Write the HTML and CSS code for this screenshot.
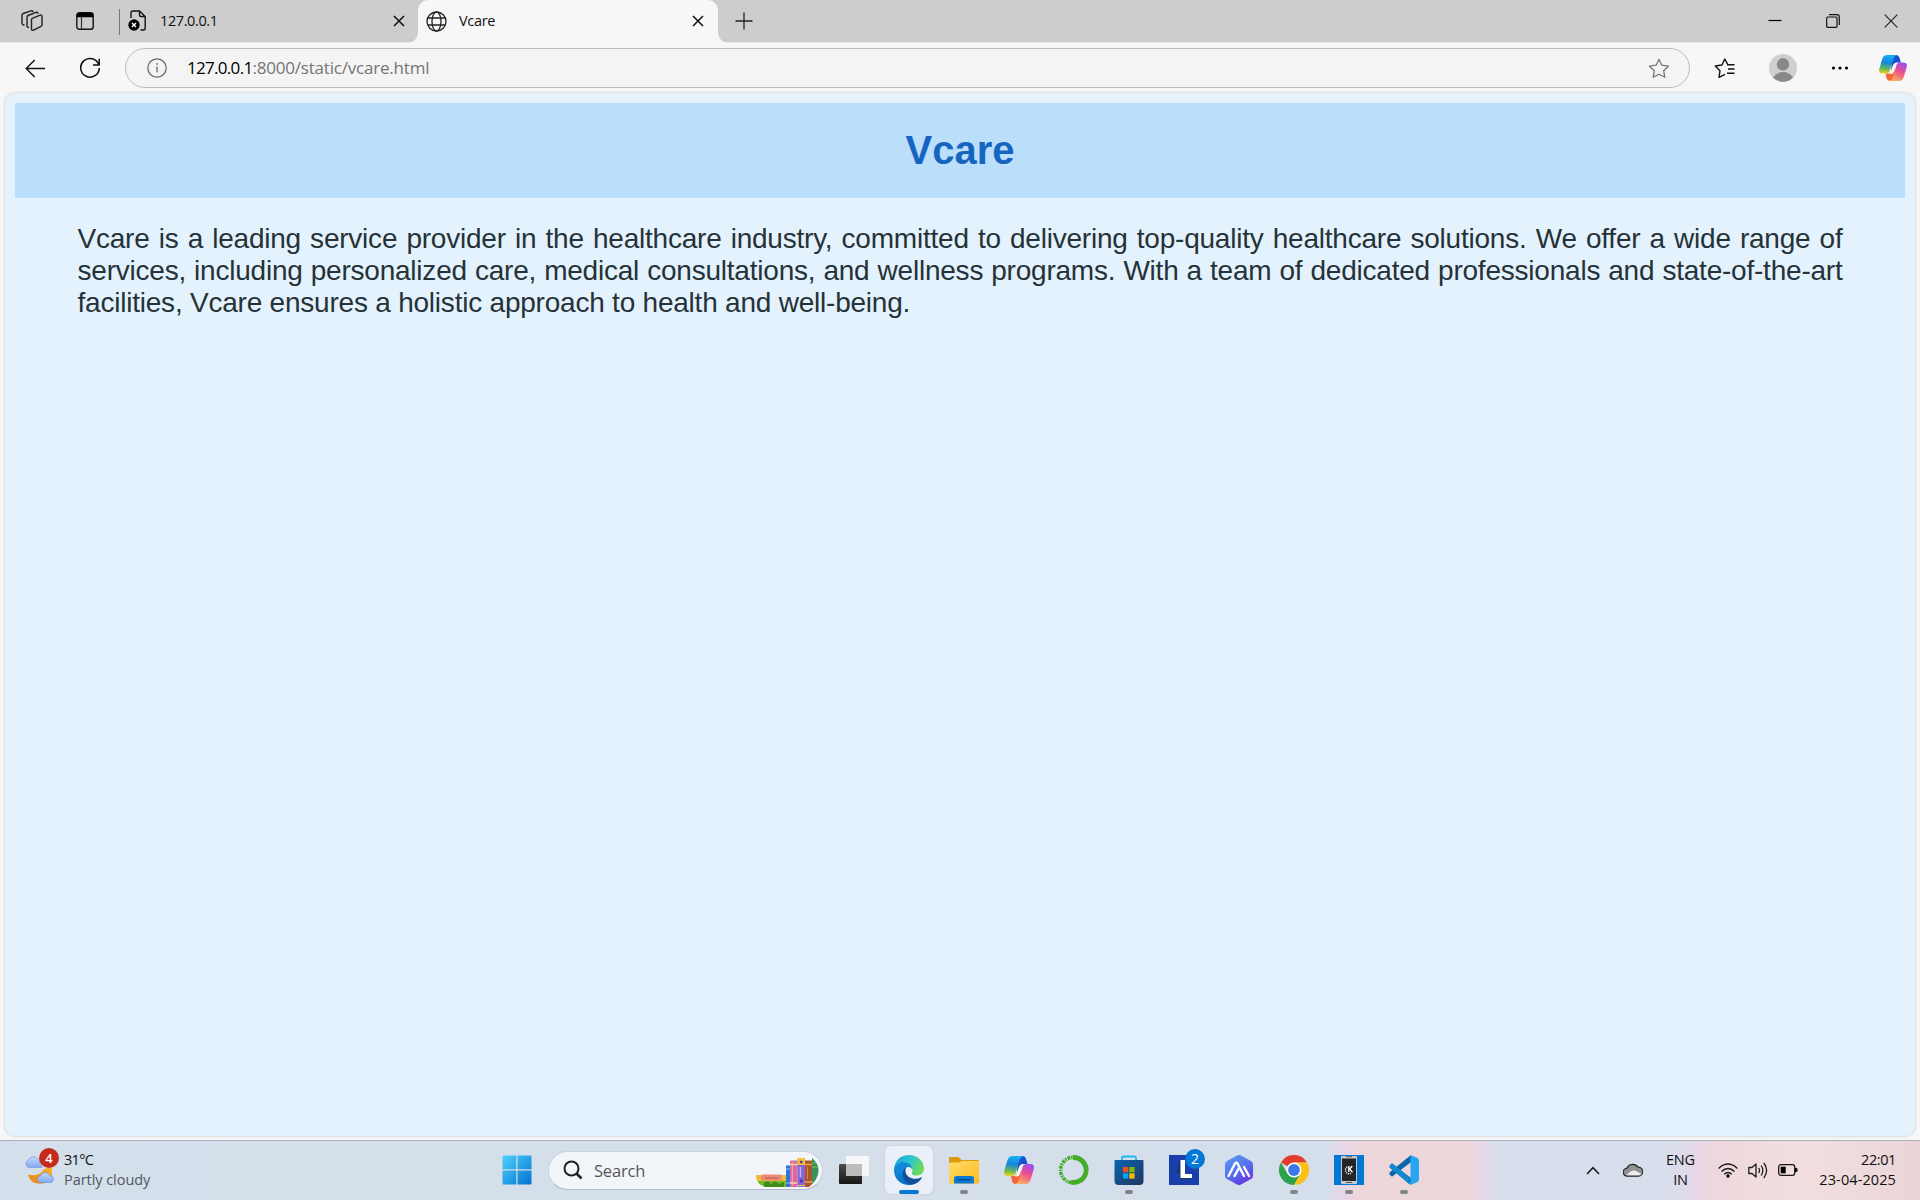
FILE: index.html
```
<!DOCTYPE html>
<html lang="en">
<head>
<meta charset="utf-8">
<title>Vcare</title>
<link rel="stylesheet" href="styles.css">
</head>
<body>
<header class="tabstrip">
  <svg class="ic workspaces" width="22" height="22" viewBox="0 0 22 22"><g fill="none" stroke="#222" stroke-width="1.4" stroke-linejoin="round" stroke-linecap="round"><path d="M11.2 8.3 19.2 5.2Q21 4.6 21 6.500V14.500Q21 15.700 20 16.300L12.500 20.200Q10.500 20.800 10.500 18.800V10Q10.500 8.700 11.200 8.300Z"/><path d="M7.500 17.500Q6 17.300 6 16V7.200Q6 6 7 5.500L15 2.400Q16.300 2 17 3.200"/><path d="M3 15Q1 14.800 1 13V5.300Q1 4 2.200 3.500L10 .9Q11.200 .6 12 1.500"/></g></svg>
  <svg class="ic tabmenu" width="18" height="18" viewBox="0 0 18 18"><rect x=".8" y=".8" width="16.400" height="16.400" rx="2.500" fill="none" stroke="#111" stroke-width="1.400"/><path d="M1 5.200V3Q1 1 3 1H15Q17 1 17 3V5.200Z" fill="#000"/><path d="M5.500 5V17" stroke="#333" stroke-width="1.200"/></svg>
  <span class="divider"></span>
  <div class="tab">
    <svg class="ic" width="19" height="22" viewBox="0 0 19 22"><path d="M3 8V3Q3 1 5 1H11.500L17.200 6.500V18Q17.200 20 15.200 20H12.500M11.500 1V5Q11.500 6.500 13 6.500H17" fill="none" stroke="#111" stroke-width="1.400"/><circle cx="6" cy="15" r="5.700"/><path d="M4 13l4 4M8 13l-4 4" stroke="#fff" stroke-width="1.400"/></svg>
    <span class="tab-title ip">127.0.0.1</span>
    <svg class="ic" width="12" height="12" viewBox="0 0 12 12"><path d="M1 1l10 10M11 1L1 11" stroke="#111" stroke-width="1.500"/></svg>
  </div>
  <div class="tab active">
    <svg class="ic" width="21" height="21" viewBox="0 0 21 21"><g fill="none" stroke="#222" stroke-width="1.300"><circle cx="10.500" cy="10.500" r="9.500"/><ellipse cx="10.500" cy="10.500" rx="4.500" ry="9.500"/><path d="M2 7H19M2 14H19"/></g></svg>
    <span class="tab-title">Vcare</span>
    <svg class="ic" width="12" height="12" viewBox="0 0 12 12"><path d="M1 1l10 10M11 1L1 11" stroke="#111" stroke-width="1.500"/></svg>
  </div>
  <svg class="ic newtab" width="18" height="18" viewBox="0 0 18 18"><path d="M9 .500V17.500M.500 9H17.500" stroke="#222" stroke-width="1.300"/></svg>
  <div class="winctl">
    <svg width="14" height="14" viewBox="0 0 14 14"><path d="M.5 6.500H13.500" stroke="#000" stroke-width="1.200"/></svg>
    <svg width="14" height="14" viewBox="0 0 14 14"><g fill="none" stroke="#111" stroke-width="1.200"><rect x=".700" y="3" width="10.300" height="10.300" rx="1"/><path d="M3 .700H11Q13.300 .700 13.300 3V11"/></g></svg>
    <svg width="14" height="14" viewBox="0 0 14 14"><path d="M.7 .7l12.600 12.600M13.300 .7L.7 13.300" stroke="#222" stroke-width="1.200"/></svg>
  </div>
</header>
<nav class="toolbar">
  <svg class="ic back" width="21" height="19" viewBox="0 0 21 19"><path d="M20 9.500H1.300M9.700 1 1.200 9.500 9.700 18" fill="none" stroke="#111" stroke-width="1.400"/></svg>
  <svg class="ic reload" width="22" height="22" viewBox="0 0 22 22"><path d="M19.800 7.800A9.300 9.300 0 1 0 20.300 11M20.200 1.800V8H14" fill="none" stroke="#111" stroke-width="1.500"/></svg>
  <div class="address">
    <svg class="ic" width="20" height="20" viewBox="0 0 20 20"><circle cx="10" cy="10" r="9.200" fill="none" stroke="#666" stroke-width="1.200"/><path d="M10 8.500V14.500" stroke="#666" stroke-width="1.300"/><circle cx="10" cy="5.900" r=".9" fill="#666"/></svg>
    <span class="url"><b class="host">127.0.0.1</b>:8000/static/vcare.html</span>
    <svg class="ic" width="22" height="21" viewBox="0 0 22 21"><path d="M11 1.300 13.800 7.200 20.500 8.200 15.700 12.800 16.800 19.300 11 16.200 5.200 19.300 6.300 12.800 1.500 8.200 8.200 7.200Z" fill="none" stroke="#777" stroke-width="1.300" stroke-linejoin="round"/></svg>
  </div>
  <svg class="ic favs" width="22" height="21" viewBox="0 0 22 21"><path d="M14 6.800 10.700 1 8 7 1.200 8 6 12.700 5 19.300 11 16.300M13 6.800H20.500M14 11H20.500M13 15.200H20.500" fill="none" stroke="#111" stroke-width="1.400" stroke-linejoin="round"/></svg>
  <svg class="ic avatar" width="28" height="28" viewBox="0 0 28 28"><circle cx="14" cy="14" r="14" fill="#d2d0ce"/><circle cx="14" cy="10.300" r="6.200" fill="#8a8886"/><path d="M4 23.500Q8 18 14 18T24 23.500A14 14 0 0 1 4 23.500Z" fill="#8a8886"/></svg>
  <svg class="ic more" width="18" height="6" viewBox="0 0 18 6"><circle cx="2.500" cy="3" r="1.600"/><circle cx="9" cy="3" r="1.600"/><circle cx="15.500" cy="3" r="1.600"/></svg>
  <svg class="ic copilot" width="28" height="26" viewBox="0 0 30 28">
    <defs>
      <linearGradient id="cpA" x1=".3" y1="0" x2=".2" y2="1"><stop offset="0" stop-color="#18aef5"/><stop offset=".4" stop-color="#1686d9"/><stop offset=".72" stop-color="#63b857"/><stop offset="1" stop-color="#f4d40e"/></linearGradient>
      <linearGradient id="cpB" x1=".7" y1="0" x2=".3" y2="1"><stop offset="0" stop-color="#9c4cf0"/><stop offset=".45" stop-color="#ec4d8d"/><stop offset="1" stop-color="#fdb15f"/></linearGradient>
      <linearGradient id="cpC" x1="0" y1="0" x2="1" y2="1"><stop offset="0" stop-color="#155de0"/><stop offset="1" stop-color="#1743c0"/></linearGradient>
    </defs>
    <g id="cop"><path d="M14 0H18.500Q21 0 22 3L23.500 8H19Q16 8 15 11L13 17Z" fill="url(#cpC)"/><path d="M7 20H11.500L17 13 16 24Q15 28 11.500 28 9 28 8 25Z" fill="#f46539"/><path d="M19 8Q16 8.500 15 12L12.500 19Q12 20.500 10 20.500H13Q15 20.500 15.800 18Z" fill="#f7f7f7"/><path d="M8.500 0H19Q16.500 .8 15.500 4L11.500 17Q10.500 20 7 20H4Q-.8 20 .2 15L3.500 4Q5 0 8.500 0Z" fill="url(#cpA)"/><path d="M22.500 8H26Q30.800 8 29.800 13L26.500 24Q25 28 21.500 28H11Q14 27.300 15 24L18.500 11.500Q19.500 8 22.500 8Z" fill="url(#cpB)"/></g>
  </svg>
</nav>
<main class="viewport">
  <article class="page">
    <h1 class="page-title">Vcare</h1>
    <p class="page-text">Vcare is a leading service provider in the healthcare industry, committed to delivering top-quality healthcare solutions. We offer a wide range of services, including personalized care, medical consultations, and wellness programs. With a team of dedicated professionals and state-of-the-art facilities, Vcare ensures a holistic approach to health and well-being.</p>
  </article>
</main>
<footer class="taskbar">
  <div class="weather">
    <div class="weather-icon">
      <svg width="31" height="29" viewBox="0 0 31 29"><defs><linearGradient id="moon" x1="0" y1="1" x2="1" y2="0"><stop offset="0" stop-color="#ee7f19"/><stop offset="1" stop-color="#f5b42b"/></linearGradient><linearGradient id="cl" x1="0" y1="0" x2="0" y2="1"><stop offset="0" stop-color="#c3dafb"/><stop offset="1" stop-color="#83a8ee"/></linearGradient></defs><path d="M4 18.500Q13 21 18 15.500 21 11 28 12V22Q20 30 11 27 5.500 25 4 18.500Z" fill="url(#moon)"/><path d="M4.500 11.500A4 4 0 0 1 4 4.200 6 6 0 0 1 14.500 3.500L18 11.500Z" fill="url(#cl)" stroke="#7fa3e8" stroke-width=".8"/><path d="M16 26.500A3.500 3.500 0 0 1 16.500 19.700 5 5 0 0 1 25.700 19.500 3.600 3.600 0 0 1 27 26.500Z" fill="url(#cl)" stroke="#7297e5" stroke-width=".8"/></svg>
      <span class="badge red">4</span>
    </div>
    <div class="weather-text"><span class="temp">31°C</span><span class="cond">Partly cloudy</span></div>
  </div>
  <div class="apps">
    <div class="app"><svg width="30" height="30" viewBox="0 0 30 30"><defs><linearGradient id="win" x1="0" y1="0" x2="1" y2="1"><stop offset="0" stop-color="#4fd1fc"/><stop offset="1" stop-color="#0272d0"/></linearGradient></defs><path d="M1.500 .5H14.300V14.300H.5V1.500Q.5 .5 1.500 .5ZM15.500 .5H28.500Q29.500 .5 29.500 1.500V14.300H15.500ZM.5 15.500H14.300V29.500H1.500Q.5 29.500 .5 28.500ZM15.500 15.500H29.500V28.500Q29.500 29.500 28.500 29.500H15.500Z" fill="url(#win)"/></svg></div>
    <div class="search">
      <svg width="20" height="20" viewBox="0 0 20 20"><circle cx="8.500" cy="8.500" r="7" fill="none" stroke="#222" stroke-width="2"/><path d="M13.500 13.500 18.500 18.500" stroke="#222" stroke-width="2.600"/></svg>
      <span class="search-label">Search</span>
      <svg class="books" width="63" height="29" viewBox="0 0 63 29"><defs><clipPath id="bk"><path d="M0 0H56Q63 6 62.500 13 62 22 53 29H10Q1 27 0 19Z"/></clipPath></defs><g clip-path="url(#bk)"><path d="M2 22H30V29H2Z" fill="#76b82a"/><path d="M8 25l4-2 3 3 4-3 4 3 5-2v5H8Z" fill="#3f8b19"/><path d="M0 17H30V23H0Z" fill="#f0bc38"/><rect x="5" y="16.500" width="21" height="6" rx="2" fill="#ee8977"/><path d="M9 20H22" stroke="#c96962" stroke-width="1.600"/><path d="M30 7.500H34V29H30Z" fill="#2b76dc"/><path d="M30 11H34M30 25H34" stroke="#83c3fb"/><rect x="34" y="2.500" width="7.500" height="26.500" rx="1" fill="#dd679f"/><path d="M36.300 4V28" stroke="#f6a8cd"/><path d="M34 6.500H41.500M34 25H41.500" stroke="#f9d7a2" stroke-width="1.500"/><rect x="41.500" y="0" width="7.500" height="29" rx="1" fill="#8865d5"/><path d="M41.500 0H49V7H41.500Z" fill="#f1c33b"/><path d="M43.500 4 45.200 2.300 47 4 45.200 5.700ZM43.500 23 45.200 21 47 23 45.200 25Z" fill="#513098"/><path d="M44.500 9V19" stroke="#c4aef7" stroke-width="1.500"/><path d="M41.500 27.500H49" stroke="#f1c33b"/><path d="M49 2.500H56V29H49Z" fill="#aa552b"/><path d="M49 6.500H56M49 24H56" stroke="#f2a14c" stroke-width="1.500"/><path d="M51.500 9V21" stroke="#df8449"/><path d="M56 0H63V29H56Z" fill="#369456"/><path d="M56 5H63M56 9H63M56 24H63" stroke="#79bd70"/></g></svg>
    </div>
    <div class="app"><svg width="30" height="30" viewBox="0 0 30 30"><defs><linearGradient id="tv" x1="0" y1="0" x2="0" y2="1"><stop offset="0" stop-color="#4b4b4b"/><stop offset="1" stop-color="#171717"/></linearGradient></defs><rect x="0" y="9" width="23" height="20" rx="1" fill="url(#tv)"/><rect x="7" y="1" width="23" height="20" rx="1" fill="#f7f7f7"/><path d="M7 9H23V21H7Z" fill="#bcbcbc"/></svg></div>
    <div class="app current"><svg width="30" height="30" viewBox="0 0 30 30"><defs><linearGradient id="eg1" x1="0" y1="0" x2="1" y2=".5"><stop offset="0" stop-color="#1aa0dc"/><stop offset=".5" stop-color="#2cc3d2"/><stop offset="1" stop-color="#68db5b"/></linearGradient><linearGradient id="eg2" x1="0" y1="0" x2=".7" y2="1"><stop offset="0" stop-color="#1593e2"/><stop offset="1" stop-color="#0868bd"/></linearGradient></defs><path d="M.2 13.500C1 5 7 0 15 0 24 0 30 6.500 30 13.500 30 18 26.500 20.500 22.500 20.500 18.500 20.500 17.500 19 18 17.700 19.500 16 18 11.500 13 11Q5 9 .2 13.500Z" fill="url(#eg1)"/><path d="M0 15C0 9.500 5 7 9.500 7 15 7 18 11 18 14Q17 11.500 14 12C10 13 10 19 13 22.500 17 27 24 26.500 27.500 23 25 27.500 20 30 15 30 7 30 0 24 0 15Z" fill="url(#eg2)"/><path d="M12 13C6.500 16 8 26 15.500 29 20 30.500 25 27 27.800 23Q28 22 27 22.500C21 25.500 12.500 23 11.500 17Q11.300 14.500 12 13Z" fill="#104f9d"/></svg></div>
    <div class="app running"><svg width="30" height="28" viewBox="0 0 30 28"><defs><linearGradient id="fo" x1="0" y1="0" x2="1" y2="1"><stop offset="0" stop-color="#ffdc6b"/><stop offset="1" stop-color="#fdbb1c"/></linearGradient></defs><path d="M0 2Q0 1 1 1H9.500L12.500 4H29Q30 4 30 5V12H0Z" fill="#dc9b0c"/><path d="M0 6.500H10L13 5H30V26.500Q30 27.500 29 27.500H1Q0 27.500 0 26.500Z" fill="url(#fo)"/><path d="M5 27.500V22.500Q5 20 7.500 20H22.500Q25 20 25 22.500V27.500Z" fill="#0c78cf"/><path d="M8.500 23.700H21.500" stroke="#074d8e" stroke-width="1.300"/></svg></div>
    <div class="app"><svg width="30" height="28" viewBox="0 0 30 28"><use href="#cop"/></svg></div>
    <div class="app"><svg width="30" height="30" viewBox="0 0 30 30"><path d="M14 2.500A12.500 12.500 0 1 1 12 27.200" fill="none" stroke="#44ae29" stroke-width="4.800"/><path d="M12 27.500A12.700 12.700 0 0 1 14 2.300" fill="none" stroke="#44ae29" stroke-width="3.600" stroke-dasharray="3 .8 1.500 1"/><path d="M10.500 25A11 11 0 0 1 12 5" fill="none" stroke="#d9e6df" stroke-width="1.300" stroke-dasharray="2 2.500"/></svg></div>
    <div class="app running"><svg width="30" height="30" viewBox="0 0 30 30"><defs><linearGradient id="st" x1="0" y1="0" x2="1" y2="1"><stop offset="0" stop-color="#0865b5"/><stop offset="1" stop-color="#23365c"/></linearGradient></defs><path d="M8 7V3Q8 1.500 9.500 1.500H20.500Q22 1.500 22 3V7" fill="none" stroke="#21b9ef" stroke-width="1.800"/><path d="M1.500 5H28.500Q29.500 5 29.500 6V26Q29.500 30 25.500 30H4.500Q.5 30 .5 26V6Q.5 5 1.500 5Z" fill="url(#st)"/><path d="M9 12H14.300V17.300H9Z" fill="#f25022"/><path d="M15.300 12H20.600V17.300H15.300Z" fill="#7fba00"/><path d="M9 18.300H14.300V23.600H9Z" fill="#00a4ef"/><path d="M15.300 18.300H20.600V23.600H15.300Z" fill="#ffb900"/></svg></div>
    <div class="app"><svg width="30" height="30" viewBox="0 0 30 30"><path d="M0 0H30V30H0Z" fill="#1b3ead"/><path d="M8 18 11 5V24H22Z" fill="#113c50"/><path d="M11.500 5H16V19H23V23H11.500Z" fill="#fff"/></svg><span class="badge blue">2</span></div>
    <div class="app"><svg width="28" height="30" viewBox="0 0 28 30"><defs><linearGradient id="hx" x1=".2" y1="0" x2=".8" y2="1"><stop offset="0" stop-color="#5798f0"/><stop offset=".5" stop-color="#5671ed"/><stop offset="1" stop-color="#692be2"/></linearGradient></defs><path d="M12 .5Q14 -.5 16 .5L26 6Q28 7 28 9.500V20.500Q28 23 26 24L16 29.500Q14 30.500 12 29.500L2 24Q0 23 0 20.500V9.500Q0 7 2 6Z" fill="url(#hx)"/><path d="M3.500 21 10 8.500Q11.300 6.300 12.500 8.500L19 21M9.500 21 14.500 12M19 12 24 21" fill="none" stroke="#fff" stroke-width="2.400" stroke-linecap="round"/></svg></div>
    <div class="app running"><svg width="30" height="30" viewBox="0 0 30 30"><path d="M15 15 2 7.500A15 15 0 0 1 28 7.500H15Z" fill="#e33b2e"/><path d="M2 7.500A15 15 0 0 0 15 30L21.500 18.800 15 15 8.500 18.800Z" fill="#2da14c"/><path d="M28 7.500A15 15 0 0 1 15 30L21.500 18.800 21.500 11 15 7.500Z" fill="#fbc116"/><circle cx="15" cy="15" r="7.500" fill="#fff"/><circle cx="15" cy="15" r="5.900" fill="#3b78e7"/></svg></div>
    <div class="app running"><svg width="30" height="30" viewBox="0 0 30 30"><path d="M0 0H30V30H0Z" fill="#0078d4"/><rect x="7" y="1" width="16" height="28" rx="1" fill="#c9c9c9"/><path d="M8 3.500H22V26H8Z" fill="#252525"/><path d="M12 1.700H18M12 27.500H18" stroke="#555"/><path d="M14.800 11V17M18.300 11 15.500 14 18.500 17.300" fill="none" stroke="#fff" stroke-width="1.300"/><path d="M13.300 12A3.200 3.200 0 1 0 17 18.300" fill="none" stroke="#ddd" stroke-width="1.500" stroke-dasharray="1.300 .7"/></svg></div>
    <div class="app running"><svg width="30" height="30" viewBox="0 0 30 30"><path d="M.5 10.500 3 8.300 22 23V30L.5 12.500Z" fill="#0879bd"/><path d="M.5 19.500 3 21.700 22 7V0L.5 17.500Z" fill="#0868aa"/><path d="M.5 12.500 3 8.300 9 12.800 20 22.700V29L.8 12.500Z" fill="#1489ce"/><path d="M21.500 0 28.500 3Q30 3.700 30 5.300V24.700Q30 26.300 28.500 27L21.500 30Z" fill="#29a6f2"/></svg></div>
  </div>
  <div class="tray">
    <svg class="chev" width="14" height="9" viewBox="0 0 14 9"><path d="M1 8 7 1.700 13 8" fill="none" stroke="#1a1a1a" stroke-width="1.600"/></svg>
    <svg class="onedrive" width="20" height="14" viewBox="0 0 20 14"><path d="M4.500 13.200A4 4 0 0 1 4 5.200 6.200 6.200 0 0 1 15 4.200 4.500 4.500 0 0 1 15.500 13.200Z" fill="#919191"/><path d="M3 12.500Q8 7 12 7.500L18.500 11 15.500 13H5Z" fill="#eee"/><path d="M4.500 13.200A4 4 0 0 1 4 5.200 6.200 6.200 0 0 1 15 4.200 4.500 4.500 0 0 1 15.500 13.200Z" fill="none" stroke="#222" stroke-width="1.200"/></svg>
    <div class="lang"><span>ENG</span><span>IN</span></div>
    <svg class="wifi" width="20" height="15" viewBox="0 0 20 15"><g fill="none" stroke="#1b1b1b" stroke-width="1.400"><path d="M.6 5.500Q10-3.300 19.400 5.500"/><path d="M3.500 8.500Q10 2.300 16.500 8.500"/><path d="M6.300 11.300Q10 7.700 13.700 11.300"/></g><circle cx="10" cy="13" r="1.700"/></svg>
    <svg class="vol" width="20" height="17" viewBox="0 0 20 17"><g fill="none" stroke="#1b1b1b" stroke-width="1.300" stroke-linejoin="round"><path d="M.8 5.500H4L8 2V15L4 11.500H.8Z"/><path d="M10.700 6Q12.300 8.500 10.700 11M13.200 3.500Q16.500 8.500 13.200 13.500M15.800 1Q21.500 8.500 15.800 16"/></g></svg>
    <svg class="batt" width="20" height="12" viewBox="0 0 20 12"><rect x=".7" y=".7" width="16" height="10.600" rx="2.200" fill="none" stroke="#1b1b1b" stroke-width="1.300"/><path d="M2.700 2.700H7.700V9.300H2.700Z"/><path d="M17 3.700 19.500 4.500V7.500L17 8.300Z"/></svg>
    <div class="clock"><span class="time">22:01</span><span class="date">23-04-2025</span></div>
  </div>
</footer>
</body>
</html>
```
FILE: styles.css
```
* { box-sizing: border-box; }
body {
  margin: 0;
  width: 1920px;
  height: 1200px;
  overflow: hidden;
  display: flex;
  flex-direction: column;
  background: #f7f7f7;
  color: #111;
  font-family: "Open Sans", "Noto Sans", sans-serif;
}
svg { display: block; flex: none; }

/* Tab strip */
.tabstrip {
  height: 43px;
  display: flex;
  align-items: center;
  background: #cdcdcd;
  border-bottom: 1px solid #e6e6e6;
}
.workspaces { margin-left: 21px; }
.tabmenu { margin-left: 33px; }
.divider { width: 1px; height: 26px; margin: 2px 0 0 25px; background: #777; }
.tab {
  display: flex;
  align-items: center;
  width: 298px;
  height: 43px;
  padding: 0 13px 0 8px;
}
.tab-title {
  flex: 1;
  margin-left: 12px;
  font-size: 14.5px;
  line-height: 40px;
  letter-spacing: -0.3px;
}
.tab-title.ip { margin-left: 13px; letter-spacing: -0.4px; }
.tab.active {
  position: relative;
  width: 300px;
  padding-right: 14px;
  background: #f7f7f7;
  border-radius: 10px 10px 0 0;
}
.tab.active::before,
.tab.active::after {
  content: "";
  position: absolute;
  bottom: 0;
  width: 10px;
  height: 10px;
}
.tab.active::before { left: -10px; background: radial-gradient(circle at 0 0, transparent 9.5px, #f7f7f7 10px); }
.tab.active::after { right: -10px; background: radial-gradient(circle at 100% 0, transparent 9.5px, #f7f7f7 10px); }
.newtab { margin-left: 17px; }
.winctl { display: flex; gap: 44px; margin: 0 22px 0 auto; }

/* Toolbar */
.toolbar {
  height: 50px;
  display: flex;
  align-items: center;
}
.back { margin-left: 25px; }
.reload { margin-left: 33px; }
.address {
  display: flex;
  align-items: center;
  width: 1565px;
  height: 40px;
  margin-left: 24px;
  padding: 0 19px 0 21px;
  background: #f4f4f4;
  border: 1px solid #bdbdbd;
  border-radius: 20px;
}
.url {
  flex: 1;
  margin-left: 20px;
  font-size: 17px;
  line-height: 36px;
  letter-spacing: -0.2px;
  color: #757575;
}
.host { font-weight: 400; letter-spacing: -0.7px; color: #000; }
.favs { margin-left: 24px; }
.avatar { margin-left: 33px; }
.more { margin-left: 34px; }
.copilot { margin-left: 30px; }

/* Page */
.viewport {
  flex: 1;
  padding: 0 5px 4px;
}
.page {
  height: 1043px;
  padding: 10px;
  background: #e3f2fd;
  border-radius: 10px;
  box-shadow: 0 0 3px rgba(0, 0, 0, 0.22);
  font-family: "Liberation Sans", Arial, sans-serif;
}
.page-title {
  margin: 0;
  padding: 25px;
  background: #bbdefb;
  color: #1565c0;
  font-size: 40px;
  line-height: 45px;
  text-align: center;
}
.page-text {
  margin: 25px 62.5px 0;
  color: #263238;
  font-size: 28px;
  line-height: 32px;
  letter-spacing: -0.22px;
  text-align: justify;
}

/* Taskbar */
.taskbar {
  height: 60px;
  display: grid;
  grid-template-columns: 493px 1fr auto;
  align-items: center;
  padding-bottom: 1px;
  border-top: 1px solid #a9b1ba;
  background: linear-gradient(to right, #d3dfea 0, #d5dfeb 1325px, #e7d6e6 1343px, #edd6db 1358px, #eed7da 1468px, #e6d6e7 1484px, #d6deeb 1497px, #d8deec 1672px, #e8d6e6 1698px, #eed8de 1716px, #f2dede 1810px, #ead4d8 1920px);
}
.weather { display: flex; padding-left: 24px; }
.weather-icon { position: relative; width: 40px; padding-top: 6px; }
.weather-text { display: flex; flex-direction: column; font-size: 14.5px; line-height: 20px; }
.temp { letter-spacing: -0.7px; }
.cond { color: #51575d; letter-spacing: -0.05px; }
.badge {
  position: absolute;
  width: 20px;
  height: 20px;
  border-radius: 50%;
  color: #fff;
  line-height: 20px;
  text-align: center;
}
.badge.red { left: 15px; top: -2px; background: #c42b1c; font-size: 13px; font-weight: 600; }
.badge.blue { left: 25px; top: 3px; background: #0078d4; font-size: 14px; }
.apps { display: flex; align-items: center; gap: 7px; }
.app {
  position: relative;
  display: flex;
  align-items: center;
  justify-content: center;
  width: 48px;
  height: 48px;
  border-radius: 5px;
}
.app.current { background: #ebf0f8; box-shadow: 0 0 1px rgba(0, 0, 0, 0.35); }
.app.running::after,
.app.current::after {
  content: "";
  position: absolute;
  bottom: 0;
  left: 20px;
  width: 8px;
  height: 4px;
  border-radius: 2px;
  background: #818488;
}
.app.current::after { left: 14px; width: 20px; background: #0078d4; }
.search {
  display: flex;
  align-items: center;
  width: 275px;
  height: 39px;
  padding: 0 3px 0 14px;
  background: #f2f6fb;
  border: 1px solid #c8d1dd;
  border-bottom-color: #aeb9c7;
  border-radius: 20px;
}
.search-label {
  flex: 1;
  margin-left: 11px;
  color: #555;
  font-size: 16.5px;
  letter-spacing: -0.2px;
}
.books { margin-top: 5px; }
.tray {
  display: flex;
  align-items: center;
  padding-right: 24px;
  font-size: 14.5px;
  line-height: 20px;
}
.onedrive { margin-left: 23px; }
.lang { display: flex; flex-direction: column; align-items: center; width: 48px; margin-left: 13px; letter-spacing: -0.3px; }
.wifi { margin-left: 14px; }
.vol { margin-left: 10px; }
.batt { margin-left: 10px; }
.clock { display: flex; flex-direction: column; align-items: flex-end; margin-left: 21px; }
.time { letter-spacing: -0.4px; }
.date { letter-spacing: 0.1px; }
```
